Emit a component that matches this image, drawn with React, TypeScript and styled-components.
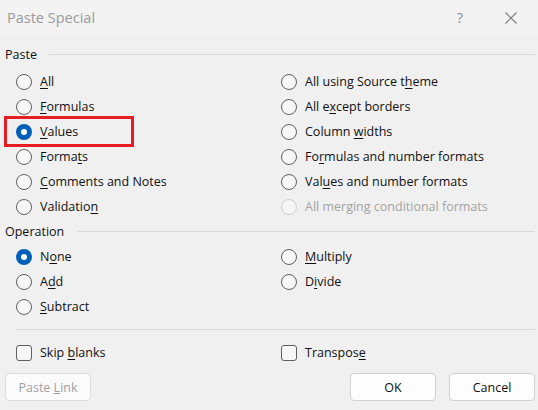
import React from "react";
import styled, { createGlobalStyle } from "styled-components";

const GlobalStyle = createGlobalStyle`
  html, body {
    margin: 0;
    padding: 0;
    background: #f0f0f0;
  }
  body {
    font-family: "Open Sans", "Noto Sans", "Liberation Sans", sans-serif;
  }
`;

type Option = { label: React.ReactNode; checked?: boolean; disabled?: boolean; marked?: boolean };

const pasteLeft: Option[] = [
  { label: <><u>A</u>ll</> },
  { label: <><u>F</u>ormulas</> },
  { label: <><u>V</u>alues</>, checked: true, marked: true },
  { label: <>Forma<u>t</u>s</> },
  { label: <><u>C</u>omments and Notes</> },
  { label: <>Validatio<u>n</u></> },
];

const pasteRight: Option[] = [
  { label: <>All using Source t<u>h</u>eme</> },
  { label: <>All e<u>x</u>cept borders</> },
  { label: <>Column <u>w</u>idths</> },
  { label: <>Fo<u>r</u>mulas and number formats</> },
  { label: <>Val<u>u</u>es and number formats</> },
  { label: <>All mer<u>g</u>ing conditional formats</>, disabled: true },
];

const opLeft: Option[] = [
  { label: <>N<u>o</u>ne</>, checked: true },
  { label: <>A<u>d</u>d</> },
  { label: <><u>S</u>ubtract</> },
];

const opRight: Option[] = [
  { label: <><u>M</u>ultiply</> },
  { label: <>D<u>i</u>vide</> },
];

const App = () => {
  return (
    <>
      <GlobalStyle />
      <Dialog>
        <TitleBar>
          <Title>Paste Special</Title>
          <TitleButtons>
            <Help>?</Help>
            <Close>
              <svg width="12" height="12" viewBox="0 0 12 12">
                <path d="M0.5 0.5 L11.5 11.5 M11.5 0.5 L0.5 11.5" stroke="#7a7a7a" strokeWidth="1.1" fill="none" />
              </svg>
            </Close>
          </TitleButtons>
        </TitleBar>
        <Body>
          <SectionHeader $top={9}>
            <SectionLabel>Paste</SectionLabel>
            <Line />
          </SectionHeader>
          <Columns $top={5}>
            <Column>
              {pasteLeft.map((o, i) => (
                <RadioRow key={i} option={o} />
              ))}
            </Column>
            <Column>
              {pasteRight.map((o, i) => (
                <RadioRow key={i} option={o} />
              ))}
            </Column>
          </Columns>
          <SectionHeader $top={0} $gap={13}>
            <SectionLabel>Operation</SectionLabel>
            <Line />
          </SectionHeader>
          <Columns $top={3}>
            <Column>
              {opLeft.map((o, i) => (
                <RadioRow key={i} option={o} />
              ))}
            </Column>
            <Column>
              {opRight.map((o, i) => (
                <RadioRow key={i} option={o} />
              ))}
            </Column>
          </Columns>
          <Separator />
          <Columns $top={10}>
            <Row>
              <Checkbox />
              <Label>
                Skip <u>b</u>lanks
              </Label>
            </Row>
            <Row>
              <Checkbox />
              <Label>
                Transpos<u>e</u>
              </Label>
            </Row>
          </Columns>
          <ButtonBar>
            <Button disabled>
              Paste <u>L</u>ink
            </Button>
            <Spacer />
            <Button>OK</Button>
            <Button>Cancel</Button>
          </ButtonBar>
        </Body>
      </Dialog>
    </>
  );
};

const RadioRow = ({ option }: { option: Option }) => (
  <Row>
    {option.marked && <Highlight />}
    <Radio $checked={option.checked} $disabled={option.disabled} />
    <Label $disabled={option.disabled}>{option.label}</Label>
  </Row>
);

export default App;

const Dialog = styled.div`
  width: 538px;
  height: 410px;
  background: #f0f0f0;
  color: #111111;
  font-size: 12.5px;
  overflow: hidden;
`;

const TitleBar = styled.div`
  height: 35px;
  background: #f3f3f3;
  display: flex;
  align-items: center;
  justify-content: space-between;
  padding-left: 7px;
`;

const Title = styled.div`
  font-size: 14.5px;
  color: #9a9a9a;
`;

const TitleButtons = styled.div`
  display: flex;
  align-items: center;
  height: 100%;
`;

const Help = styled.div`
  width: 46px;
  text-align: center;
  font-size: 14px;
  color: #8a8a8a;
  margin-right: 5px;
`;

const Close = styled.div`
  width: 46px;
  height: 100%;
  display: flex;
  align-items: center;
  justify-content: center;
  margin-right: 4px;
`;

const Body = styled.div`
  display: flex;
  flex-direction: column;
  padding: 0 3px 0 5px;
`;

const SectionHeader = styled.div<{ $top: number; $gap?: number }>`
  display: flex;
  align-items: center;
  height: 20px;
  margin-top: ${({ $top }) => $top}px;
  gap: ${({ $gap }) => $gap ?? 12}px;
`;

const SectionLabel = styled.div`
  color: #111111;
`;

const Line = styled.div`
  flex: 1;
  height: 1px;
  background: #d9d9d9;
`;

const Columns = styled.div<{ $top: number }>`
  display: grid;
  grid-template-columns: 265px 1fr;
  padding-left: 11px;
  margin-top: ${({ $top }) => $top}px;
  margin-bottom: 2px;
`;

const Column = styled.div`
  display: flex;
  flex-direction: column;
`;

const Row = styled.div`
  position: relative;
  height: 25px;
  display: flex;
  align-items: center;
  gap: 8px;
`;

const Highlight = styled.div`
  position: absolute;
  left: -12px;
  top: -3.5px;
  width: 130px;
  height: 31px;
  box-sizing: border-box;
  border: 3px solid #e81c24;
  pointer-events: none;
`;

const Radio = styled.span<{ $checked?: boolean; $disabled?: boolean }>`
  width: 16px;
  height: 16px;
  box-sizing: border-box;
  border-radius: 50%;
  flex-shrink: 0;
  border: ${({ $checked, $disabled }) =>
    $checked ? "5px solid #005fb8" : `1px solid ${$disabled ? "#cfcfcf" : "#5f5f5f"}`};
  background: ${({ $checked, $disabled }) => ($checked ? "#ffffff" : $disabled ? "#f5f5f5" : "#f7f7f7")};
`;

const Checkbox = styled.span`
  width: 16px;
  height: 16px;
  box-sizing: border-box;
  border-radius: 3px;
  border: 1px solid #5f5f5f;
  background: #f7f7f7;
  flex-shrink: 0;
`;

const Label = styled.span<{ $disabled?: boolean }>`
  color: ${({ $disabled }) => ($disabled ? "#a3a3a3" : "#111111")};
  white-space: nowrap;
  u {
    text-underline-offset: 2px;
  }
`;

const Separator = styled.div`
  height: 1px;
  background: #d9d9d9;
  margin: 8px 0 0 10px;
`;

const ButtonBar = styled.div`
  display: flex;
  align-items: center;
  gap: 13px;
  margin-top: 6px;
`;

const Spacer = styled.div`
  flex: 1;
`;

const Button = styled.button`
  width: 86px;
  height: 28px;
  box-sizing: border-box;
  border-radius: 4px;
  border: 1px solid #d1d1d1;
  background: #fdfdfd;
  font-family: inherit;
  font-size: 12.5px;
  color: #111111;
  padding: 0;
  &:disabled {
    color: #a0a0a0;
    border-color: #dcdcdc;
    background: #fbfbfb;
  }
`;
